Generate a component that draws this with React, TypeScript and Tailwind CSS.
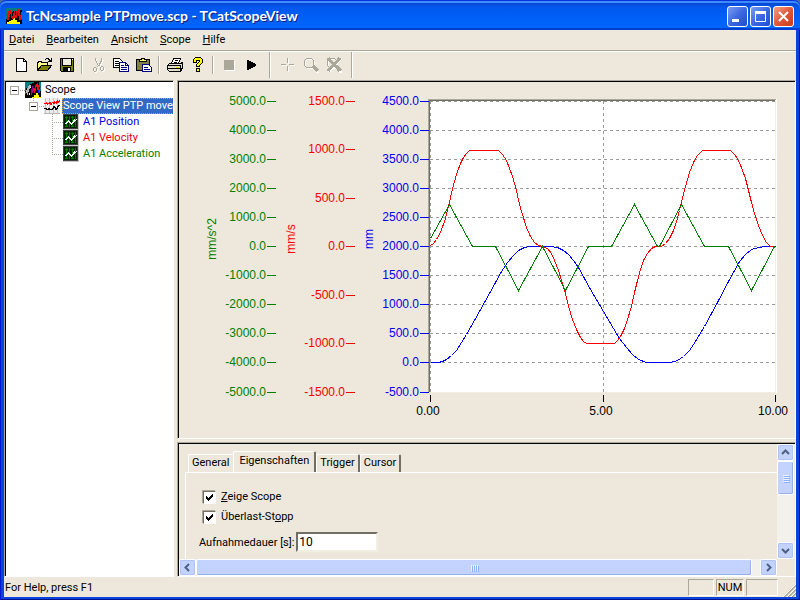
import { useState, type ReactNode } from 'react';

type Point = [number, number];

const menuItems = ['Datei', 'Bearbeiten', 'Ansicht', 'Scope', 'Hilfe'];

const tabs = ['General', 'Eigenschaften', 'Trigger', 'Cursor'];

// Plot area of the chart, in viewBox units
const plot = { left: 430, right: 775, top: 101, bottom: 392 };

const accelerationAxis = [5000, 4000, 3000, 2000, 1000, 0, -1000, -2000, -3000, -4000, -5000];
const velocityAxis = [1500, 1000, 500, 0, -500, -1000, -1500];
const positionAxis = [4500, 4000, 3500, 3000, 2500, 2000, 1500, 1000, 500, 0, -500];
const timeAxis = [0, 5, 10];

const acceleration: Point[] = [
  [430, 238], [449, 204], [472, 246], [495, 246], [518, 290], [542, 246],
  [565, 290], [588, 246], [611, 246], [634, 204], [657, 246], [659, 246],
  [681, 204], [704, 246], [728, 246], [751, 290], [774, 246],
];

const velocity: Point[] = [
  [430, 245], [433, 243], [436, 239], [440, 232], [444, 221], [447, 210],
  [449, 202], [452, 188], [456, 174], [460, 163], [463, 157], [466, 153],
  [469, 150], [498, 150], [502, 154], [506, 160], [509, 168], [512, 176],
  [516, 190], [519, 204], [522, 214], [526, 227], [530, 236], [534, 242],
  [538, 245], [542, 246], [547, 248], [551, 253], [554, 260], [558, 270],
  [562, 283], [565, 293], [568, 306], [572, 319], [576, 329], [580, 337],
  [583, 341], [586, 343], [614, 343], [617, 340], [620, 336], [624, 328],
  [627, 319], [631, 306], [634, 292], [637, 280], [640, 269], [643, 260],
  [647, 253], [651, 248], [655, 246], [661, 246], [665, 243], [669, 238],
  [673, 230], [676, 221], [679, 210], [682, 197], [685, 186], [689, 172],
  [693, 162], [697, 155], [702, 150], [730, 150], [735, 155], [739, 162],
  [742, 170], [745, 178], [748, 190], [751, 202], [754, 213], [758, 225],
  [762, 235], [766, 242], [770, 246], [774, 246],
];

const position: Point[] = [
  [430, 362], [438, 362], [442, 361], [446, 359], [451, 355], [456, 350],
  [461, 342], [466, 334], [474, 320], [484, 302], [495, 282], [501, 271],
  [507, 262], [513, 255], [518, 250], [524, 247], [530, 246], [550, 246],
  [557, 247], [563, 250], [568, 254], [573, 260], [578, 267], [590, 289],
  [603, 311], [613, 328], [619, 338], [626, 347], [632, 354], [638, 359],
  [646, 362], [670, 362], [677, 360], [683, 356], [689, 350], [695, 341],
  [704, 326], [717, 302], [728, 281], [739, 261], [745, 254], [751, 249],
  [758, 247], [765, 246], [775, 246],
];

const toPoints = (points: Point[]) =>
  points.map(([x, y]) => `${x + 0.5},${y + 0.5}`).join(' ');

/* ---------- icons ---------- */

function Icon({ children }: { children: ReactNode }) {
  return (
    <svg
      width="16"
      height="16"
      viewBox="0 0 16 16"
      fill="none"
      shapeRendering="crispEdges"
      className="shrink-0"
      aria-hidden="true"
    >
      {children}
    </svg>
  );
}

// Black scope with grey, purple and red traces over a yellow cone
function ScopeIcon() {
  return (
    <Icon>
      <path d="M0 0h16v16H0z" fill="#000" />
      <path d="M0 0h9v1H7v1H5v2H3v2H1v3H0zM14 0h2v9h-1V5h-1zM0 10h1v2H0z" fill="#008080" />
      <path d="M7 16v-1h2v-2h2v-2h2v2h1v2h2v1z" fill="#ff0" />
      <path d="M9 9V6h1V3h1V2h1V1h1v2h1v4h1v4h-2V8h-1V5h-1v4h-1v2H9z" fill="#f01010" />
      <path d="M1 11V8h1V6h1V4h1V3h2v2H5v2H4v3H3v3H2v-2z" fill="#b8b8b8" />
      <path d="M6 10V7h1V4h1v2h1v3H8v2H7v2H6z" fill="#a000a0" />
      <path d="M4 11h1v2H4zM5 5h1v1H5z" fill="#fff" />
      <path d="M13 8h1v3h-1z" fill="#2020f0" />
    </Icon>
  );
}

function AppIcon() {
  return (
    <Icon>
      <path d="M0 0h16v16H0z" fill="#000" />
      <path d="M0 0h16v2h-2v2h-1V2h-2v2h-1V3H7v1H5v1H3v3H1v3H0zM15 4h1v7h-1z" fill="#007c7c" />
      <path d="M1 16v-2h2v-1h2v-1h2v-2h2v2h2v2h3v2z" fill="#ff0" />
      <path
        d="M1 10V6h1V3h1V2h2v2h1v4h1V5h1V3h1v4h1V3h1V1h2v2h1v4h1v5h-2V8h-1V5h-1v5H8v1H6v-1H5V6H4v3H3v3H1z"
        fill="#e01010"
      />
    </Icon>
  );
}

function ViewIcon() {
  return (
    <Icon>
      <path d="M0 0h16v16H0z" fill="#ececec" />
      <path d="M1.500 0v16M5.500 0v16M9.500 0v16M13.500 0v16" stroke="#c4c4c4" />
      <path
        d="M0 5h2V4h1v1h2V4h2v1h1V4h2V3h1v1h1V3h1V2h1v1h1V2h1v2h-1v1h-2v1h-1V5h-1v1H9V5H8v2H6V6H4v1H3V6H0z"
        fill="#f00"
      />
      <path d="M0 10.500h2v1h2v-1h1v1h3v-1h1v-2h1v1h1v2h1v-1h1v-2h1v-1h2" stroke="#000" />
      <path d="M0 15.500h16" stroke="#b8b8b8" />
    </Icon>
  );
}

function SignalIcon() {
  return (
    <Icon>
      <path d="M0 0h16v16H0z" fill="#c8c8c8" />
      <path d="M0 0h15v15H0z" fill="#404040" />
      <path d="M1 1h13v13H1z" fill="#002000" />
      <path d="M3.500 2v11M6.500 2v11M9.500 2v11M12.500 2v11" stroke="#008000" />
      <path d="M2 3.500h11M2 12.500h11" stroke="#008000" strokeDasharray="1 1" />
      <path
        d="M2 9h1V8h1V7h1V6h1v1h1v1h1v1h1V8h1V6h1V5h1v1h1V5h1v1h-1v1h-1v1h-1v1h-1v1H9v1H8v-1H7V9H6V8H5v1H4v1H2z"
        fill="#f0fff0"
      />
    </Icon>
  );
}

function NewIcon() {
  return (
    <Icon>
      <path d="M3.500 1.500h7l3 3v10h-10z" fill="#fff" stroke="#000" />
      <path d="M10.500 1.500v3h3" stroke="#000" />
    </Icon>
  );
}

function OpenIcon() {
  return (
    <Icon>
      <path d="M1.500 13.500v-8h1v-1h3v1h6v3" fill="#ffff80" stroke="#000" />
      <path d="M1.500 13.500l4-5h10l-4 5z" fill="#808000" stroke="#000" />
      <path d="M9 2h1V1h3v1h1v1h1V1h1v4h-4V4h1V3h-1V2h-2v1H9z" fill="#000" />
    </Icon>
  );
}

function SaveIcon() {
  return (
    <Icon>
      <path d="M1.500 1.500h13v13h-12l-1-1z" fill="#808000" stroke="#000" />
      <path d="M4 2h8v6H4z" fill="#f0ece0" />
      <path d="M4 10h8v5H4z" fill="#000" />
      <path d="M9 11h2v3H9zM13 2h1v1h-1z" fill="#fff" />
      <path d="M3.500 2v6h9V2" stroke="#000" />
    </Icon>
  );
}

// Disabled glyphs are drawn twice: a white copy one pixel down-right, then the grey one
function Embossed({ d }: { d: string }) {
  return (
    <>
      <path d={d} fill="#fff" transform="translate(1 1)" />
      <path d={d} fill="#aca899" />
    </>
  );
}

function CutIcon() {
  return (
    <Icon>
      <Embossed d="M5 1h1v3h1v2h1v2h1V6h1V4h1V1h1v4h-1v2h-1v2H9v1h2V9h2v1h1v3h-1v1h-2v-1h-1v-3H9v-1H8v1H7v4H6v1H4v-1H3v-3h1v-1h2v1h1V9h1V8H7V6H6V4H5zM4 11v3h2v-3zM11 10v3h2v-3z" />
    </Icon>
  );
}

function CopyIcon() {
  return (
    <Icon>
      <path d="M.5 1.500h6l3 3v6h-9z" fill="#fff" stroke="#000" />
      <path d="M2 4.500h4M2 6.500h4M2 8.500h4" stroke="#000" />
      <path d="M6.500 5.500h6l3 3v6h-9z" fill="#fff" stroke="#000080" />
      <path d="M12.500 5.500v3h3M8 8.500h3M8 10.500h6M8 12.500h6" stroke="#000080" />
    </Icon>
  );
}

function PasteIcon() {
  return (
    <Icon>
      <path d="M.5 2.500h13v11H.5z" fill="#808040" stroke="#000" />
      <path d="M3.500 4.500v-2h2v-1h3v1h2v2z" fill="#ffff60" stroke="#000" />
      <path d="M6.500 7.500h6l3 3v4h-9z" fill="#fff" stroke="#000080" />
      <path d="M8 10.500h4M8 12.500h6" stroke="#000080" />
    </Icon>
  );
}

function PrintIcon() {
  return (
    <Icon>
      <path d="M4.500 6.500l2-5h7l-2 5z" fill="#fff" stroke="#000" />
      <path d="M8 3.500h3M7 5.500h3" stroke="#000" />
      <path d="M.5 8.500l2-2h11l2-1v5l-2 4h-11l-2-2z" fill="#e0dccf" stroke="#000" />
      <path d="M1 8.500h12M1 11.500h12M13.500 8v6" stroke="#000" />
      <path d="M9 10h3v1H9z" fill="#e8e000" />
    </Icon>
  );
}

function HelpIcon() {
  return (
    <Icon>
      <path
        d="M3.500 5.500v-3l2-2h5l2 2v3l-3 3v1h-3v-2l3-3v-1h-3v2zM6.500 11.500h3v3h-3z"
        fill="#ff0"
        stroke="#000"
      />
    </Icon>
  );
}

function StopIcon() {
  return (
    <Icon>
      <Embossed d="M3 3h10v10H3z" />
    </Icon>
  );
}

function PlayIcon() {
  return (
    <Icon>
      <path d="M3 3h2v1h2v1h2v1h2v1h1v2h-1v1H9v1H7v1H5v1H3z" fill="#000" />
    </Icon>
  );
}

function CrossIcon() {
  return (
    <Icon>
      <Embossed d="M7 1h1v5H7zM7 9h1v5H7zM1 7h5v1H1zM9 7h5v1H9z" />
    </Icon>
  );
}

function ZoomIcon({ crossed = false }: { crossed?: boolean }) {
  return (
    <Icon>
      <circle cx="7" cy="7" r="5" stroke="#fff" />
      <circle cx="6" cy="6" r="5" stroke="#aca899" />
      <path d="M11 11l4 5" stroke="#fff" strokeWidth="2" />
      <path d="M10 9l5 5" stroke="#aca899" strokeWidth="3" />
      {crossed && (
        <>
          <path d="M3 2l12 13M15 2L3 15" stroke="#fff" strokeWidth="2" />
          <path d="M2 1l12 13M14 1L2 14" stroke="#aca899" strokeWidth="3" />
        </>
      )}
    </Icon>
  );
}

/* ---------- toolbar ---------- */

function ToolButton({
  label,
  disabled,
  children,
}: {
  label: string;
  disabled?: boolean;
  children: ReactNode;
}) {
  return (
    <button
      type="button"
      title={label}
      aria-label={label}
      disabled={disabled}
      className="flex h-6 w-[23px] items-center justify-center"
    >
      {children}
    </button>
  );
}

function Divider() {
  return (
    <div className="flex w-2 justify-center">
      <div className="h-[18px] w-0.5 border-l border-r border-l-[#aca899] border-r-white" />
    </div>
  );
}

function BandEdge() {
  return (
    <div className="flex w-[13px] justify-center self-stretch">
      <div className="w-0.5 border-l border-r border-l-[#aca899] border-r-white" />
    </div>
  );
}

function Toolbar() {
  return (
    <div className="flex h-7 items-center pb-0.5 pl-[5px]">
      <ToolButton label="Neu"><NewIcon /></ToolButton>
      <ToolButton label="Öffnen"><OpenIcon /></ToolButton>
      <ToolButton label="Speichern"><SaveIcon /></ToolButton>
      <Divider />
      <ToolButton label="Ausschneiden" disabled><CutIcon /></ToolButton>
      <ToolButton label="Kopieren"><CopyIcon /></ToolButton>
      <ToolButton label="Einfügen"><PasteIcon /></ToolButton>
      <Divider />
      <ToolButton label="Drucken"><PrintIcon /></ToolButton>
      <ToolButton label="Hilfe"><HelpIcon /></ToolButton>
      <Divider />
      <ToolButton label="Stopp" disabled><StopIcon /></ToolButton>
      <ToolButton label="Start"><PlayIcon /></ToolButton>
      <BandEdge />
      <ToolButton label="Cursor" disabled><CrossIcon /></ToolButton>
      <ToolButton label="Zoom" disabled><ZoomIcon /></ToolButton>
      <ToolButton label="Zoom aus" disabled><ZoomIcon crossed /></ToolButton>
      <BandEdge />
    </div>
  );
}

/* ---------- title bar ---------- */

function CaptionButton({
  label,
  close,
  children,
}: {
  label: string;
  close?: boolean;
  children: ReactNode;
}) {
  return (
    <button
      type="button"
      aria-label={label}
      className={`flex h-[21px] w-[21px] items-center justify-center rounded-[3px] border border-white ${
        close
          ? 'bg-linear-to-br from-[#f0a088] via-[#e0583a] to-[#c83c14]'
          : 'bg-linear-to-br from-[#7c9cf0] via-[#3c68e0] to-[#1c4cd0]'
      }`}
    >
      <svg width="15" height="15" viewBox="0 0 15 15" fill="none" stroke="#fff" aria-hidden="true">
        {children}
      </svg>
    </button>
  );
}

function TitleBar() {
  return (
    <header className="flex h-[30px] items-center gap-1 rounded-t-md bg-linear-to-b from-[#0a3cc0] via-[#0058ee] via-25% to-[#0068ff] pt-0.5 pr-1.5 pl-1.5 shadow-[inset_0_1px_0_#0831d9,inset_0_3px_0_#3c8cff,inset_0_-2px_0_#0040d0]">
      <AppIcon />
      <h1 className="flex-1 truncate font-['Lato'] text-[14px] leading-5 font-bold text-white [text-shadow:1px_1px_0_#0a1f80]">
        TcNcsample PTPmove.scp - TCatScopeView
      </h1>
      <div className="flex gap-0.5">
        <CaptionButton label="Minimieren">
          <path d="M2 11.500h7" strokeWidth="3" />
        </CaptionButton>
        <CaptionButton label="Maximieren">
          <path d="M2.500 3v9.500h10V3" />
          <path d="M2 3.500h11" strokeWidth="3" />
        </CaptionButton>
        <CaptionButton label="Schließen" close>
          <path d="M3 3l9 9M12 3l-9 9" strokeWidth="2" />
        </CaptionButton>
      </div>
    </header>
  );
}

/* ---------- tree ---------- */

function Gutter({ kind }: { kind: 'root' | 'node' | 'line' | 'last' }) {
  const box = kind === 'root' || kind === 'node';
  return (
    <svg width="19" height="16" viewBox="0 0 19 16" fill="none" shapeRendering="crispEdges" className="shrink-0" aria-hidden="true">
      <g stroke="#aca899" strokeDasharray="1 1">
        {kind !== 'root' && <path d="M8.500 0v8" />}
        {kind === 'line' && <path d="M8.500 8v8" />}
        <path d="M8 8.500h11" />
      </g>
      {box && (
        <>
          <path d="M4.500 4.500h8v8h-8z" fill="#fff" stroke="#aca899" />
          <path d="M6 8.500h5" stroke="#000" />
        </>
      )}
    </svg>
  );
}

function Tree() {
  const channels = [
    { name: 'A1 Position', color: 'text-[#0000e0]' },
    { name: 'A1 Velocity', color: 'text-[#f00000]' },
    { name: 'A1 Acceleration', color: 'text-[#008000]' },
  ];

  return (
    <Sunken className="w-[170px] shrink-0">
      <nav className="h-full overflow-hidden bg-white">
        <ul className="leading-4 whitespace-nowrap">
          <li>
            <div className="flex items-center">
              <Gutter kind="root" />
              <ScopeIcon />
              <span className="ml-1">Scope</span>
            </div>
            <ul className="pl-[19px]">
              <li>
                <div className="flex items-center">
                  <Gutter kind="node" />
                  <ViewIcon />
                  <span className="ml-0.5 border border-dotted border-[#e0a040] bg-[#316ac5] leading-[14px] text-white">
                    Scope View PTP move
                  </span>
                </div>
                <ul className="pl-[19px]">
                  {channels.map((channel, i) => (
                    <li key={channel.name} className="flex items-center">
                      <Gutter kind={i === channels.length - 1 ? 'last' : 'line'} />
                      <SignalIcon />
                      <span className={`ml-1 ${channel.color}`}>{channel.name}</span>
                    </li>
                  ))}
                </ul>
              </li>
            </ul>
          </li>
        </ul>
      </nav>
    </Sunken>
  );
}

function Sunken({ className = '', children }: { className?: string; children: ReactNode }) {
  return (
    <div
      className={`border border-t-[#aca899] border-r-white border-b-white border-l-[#aca899] ${className}`}
    >
      <div className="h-full border-t border-l border-black">{children}</div>
    </div>
  );
}

/* ---------- chart ---------- */

function ValueAxis({
  values,
  x,
  color,
  unit,
  unitX,
}: {
  values: number[];
  x: number;
  color: string;
  unit: string;
  unitX: number;
}) {
  const step = (plot.bottom - plot.top) / (values.length - 1);
  return (
    <g fill={color}>
      {values.map((value, i) => {
        const y = Math.floor(plot.top + i * step);
        return (
          <g key={value}>
            <text x={x} y={y + 4} textAnchor="end">
              {value.toFixed(1)}
            </text>
            <rect x={x + 1} y={y} width="9" height="1" />
          </g>
        );
      })}
      <text transform={`translate(${unitX} 239) rotate(-90)`} textAnchor="middle">
        {unit}
      </text>
    </g>
  );
}

function Chart() {
  const scaleX = (plot.right - plot.left) / 10;
  return (
    <svg
      viewBox="179 82 616 356"
      className="block w-full font-['Liberation_Sans',sans-serif] text-[12px]"
      shapeRendering="crispEdges"
      role="img"
      aria-label="Scope View PTP move"
    >
      <rect x="428" y="99" width="349" height="294" fill="#fff" />
      <path d="M428.500 393V99.500H776" fill="none" stroke="#aca899" />
      <path d="M429.500 392V100.500H775" fill="none" stroke="#716f64" />
      <path d="M775.500 100V392.500H430" fill="none" stroke="#f1efe2" />

      <g stroke="#9a9a9a" strokeDasharray="3 3">
        {positionAxis.slice(0, -1).map((value, i) => {
          const y = Math.floor(plot.top + i * 29.1) + 0.5;
          return <line key={value} x1={plot.left} x2={plot.right} y1={y} y2={y} />;
        })}
        <line x1="430.5" x2="430.5" y1="101" y2="392" />
        <line x1="603.5" x2="603.5" y1="101" y2="392" />
      </g>

      <g fill="none">
        <polyline points={toPoints(position)} stroke="#0000f0" />
        <polyline points={toPoints(velocity)} stroke="#f80000" />
        <polyline points={toPoints(acceleration)} stroke="#008000" />
      </g>

      <ValueAxis values={accelerationAxis} x={266} color="#008000" unit="mm/s^2" unitX={216} />
      <ValueAxis values={velocityAxis} x={345} color="#f80000" unit="mm/s" unitX={295} />
      <ValueAxis values={positionAxis} x={419} color="#0000f0" unit="mm" unitX={373} />

      {timeAxis.map((t) => {
        const x = Math.round(plot.left + t * scaleX);
        return (
          <g key={t}>
            <rect x={x} y="395" width="1" height="7" />
            <text x={x - 2} y="415" textAnchor="middle">
              {t.toFixed(2)}
            </text>
          </g>
        );
      })}
    </svg>
  );
}

/* ---------- properties ---------- */

function ScrollButton({ label, d }: { label: string; d: string }) {
  return (
    <button
      type="button"
      aria-label={label}
      className="flex h-[17px] w-[17px] shrink-0 items-center justify-center rounded-[2px] border border-white bg-[#c3d3fd] shadow-[inset_0_0_0_1px_#b0c4f4]"
    >
      <svg width="9" height="9" viewBox="0 0 9 9" fill="none" stroke="#4d6185" strokeWidth="2" aria-hidden="true">
        <path d={d} />
      </svg>
    </button>
  );
}

function CheckBox({ children }: { children: ReactNode }) {
  const [checked, setChecked] = useState(true);
  return (
    <label className="flex h-5 items-center gap-[5px]">
      <span className="grid">
        <input
          type="checkbox"
          checked={checked}
          onChange={(e) => setChecked(e.target.checked)}
          className="col-start-1 row-start-1 h-[13px] w-[13px] appearance-none border border-t-[#716f64] border-r-white border-b-white border-l-[#716f64] bg-white shadow-[-1px_-1px_0_#aca899]"
        />
        {checked && (
          <svg
            width="13"
            height="13"
            viewBox="0 0 13 13"
            shapeRendering="crispEdges"
            className="pointer-events-none col-start-1 row-start-1"
            aria-hidden="true"
          >
            <path d="M3 5h1v1h1v1h1V6h1V5h1V4h1V3h1v3H9v1H8v1H7v1H6v1H5V9H4V8H3z" />
          </svg>
        )}
      </span>
      <span>{children}</span>
    </label>
  );
}

function Properties() {
  const [active, setActive] = useState('Eigenschaften');
  const [duration, setDuration] = useState('10');

  return (
    <div className="grid h-full grid-cols-[1fr_18px] grid-rows-[1fr_17px]">
      <div className="overflow-hidden pt-[7px] pl-1.5">
        <div role="tablist" className="flex items-end pl-[3px]">
          {tabs.map((tab) => (
            <button
              key={tab}
              type="button"
              role="tab"
              aria-selected={tab === active}
              onClick={() => setActive(tab)}
              className={`rounded-t-[2px] border-t border-r-2 border-l border-t-white border-r-[#716f64] border-l-white px-[3px] ${
                tab === active ? 'h-[21px] px-[5px] pb-0.5' : 'h-[18px] first:border-r-0 first:pr-1'
              }`}
            >
              {tab}
            </button>
          ))}
        </div>
        <div role="tabpanel" className="h-full border-t border-l border-white pt-3.5 pl-[13px]">
          <div className="pl-1">
            <CheckBox>
              <u>Z</u>eige Scope
            </CheckBox>
            <CheckBox>
              Überlast-St<u>o</u>pp
            </CheckBox>
          </div>
          <div className="mt-[5px] flex items-center gap-0.5">
            <label htmlFor="duration" className="pt-0.5">
              Aufnahmedauer [s]:
            </label>
            <input
              id="duration"
              type="text"
              value={duration}
              onChange={(e) => setDuration(e.target.value)}
              className="h-5 w-[82px] border-2 border-t-[#716f64] border-r-[#f1efe2] border-b-[#f1efe2] border-l-[#716f64] bg-white px-px text-[12px] outline-none"
            />
          </div>
        </div>
      </div>

      <div className="mr-px flex flex-col bg-[#f3f1ec]">
        <ScrollButton label="Nach oben" d="M1 6l3.500-3.500L8 6" />
        <div className="flex h-[34px] flex-col items-center justify-center gap-px rounded-[2px] border border-white bg-[#c3d3fd] shadow-[inset_-1px_-1px_0_#98b0e8]">
          {[0, 1, 2, 3].map((i) => (
            <div key={i} className="h-px w-1.5 bg-[#eef4fe] shadow-[1px_1px_0_#8cb0f8]" />
          ))}
        </div>
        <div className="flex-1" />
        <ScrollButton label="Nach unten" d="M1 3l3.500 3.500L8 3" />
      </div>

      <div className="flex bg-[#f3f1ec]">
        <ScrollButton label="Nach links" d="M6 1L2.500 4.500 6 8" />
        <div className="flex flex-1 items-center justify-center gap-px rounded-[2px] border border-white bg-[#c3d3fd] shadow-[inset_-1px_-1px_0_#98b0e8]">
          {[0, 1, 2, 3].map((i) => (
            <div key={i} className="h-1.5 w-px bg-[#eef4fe] shadow-[1px_1px_0_#8cb0f8]" />
          ))}
        </div>
        <div className="w-2" />
        <ScrollButton label="Nach rechts" d="M3 1l3.500 3.500L3 8" />
      </div>
      <div />
    </div>
  );
}

/* ---------- status bar ---------- */

function StatusBar() {
  const cell = 'h-[17px] border border-t-[#aca899] border-r-white border-b-white border-l-[#aca899]';
  return (
    <footer className="flex h-5 items-center gap-0.5">
      <span className="flex-1 pt-0.5 pl-px">For Help, press F1</span>
      <div className={`w-[26px] ${cell}`} />
      <div className={`w-7 text-center leading-[15px] ${cell}`}>NUM</div>
      <div className={`w-8 ${cell}`} />
      <svg width="14" height="14" viewBox="0 0 14 14" className="ml-0.5 self-end" aria-hidden="true">
        <path d="M2 14L14 2M6 14l8-8M10 14l4-4" stroke="#aca899" strokeWidth="2" />
        <path d="M1 14L14 1M5 14l9-9M9 14l5-5" stroke="#fff" />
      </svg>
    </footer>
  );
}

export default function App() {
  return (
    <div className="bg-[#4a6a9c]">
      <div className="flex min-h-screen flex-col rounded-t-md bg-[#0844dc] pb-[3px] font-['Roboto',sans-serif] text-[11px] text-black shadow-[inset_1px_0_0_#0019cf,inset_-1px_-1px_0_#00138c]">
        <TitleBar />
        <div className="mx-1 flex flex-1 flex-col bg-[#eee8dc]">
          <nav className="flex h-5 items-center">
            {menuItems.map((item) => (
              <button key={item} type="button" className="px-[5px] leading-5 not-first:ml-0.5">
                <u>{item[0]}</u>
                {item.slice(1)}
              </button>
            ))}
          </nav>
          <div className="h-0.5 border-t border-b border-t-[#aca899] border-b-white" />
          <Toolbar />
          <main className="flex flex-1 gap-[3px]">
            <Tree />
            <div className="flex min-w-0 flex-1 flex-col gap-[3px]">
              <Sunken>
                <Chart />
              </Sunken>
              <Sunken className="flex-1">
                <Properties />
              </Sunken>
            </div>
          </main>
          <StatusBar />
        </div>
      </div>
    </div>
  );
}
